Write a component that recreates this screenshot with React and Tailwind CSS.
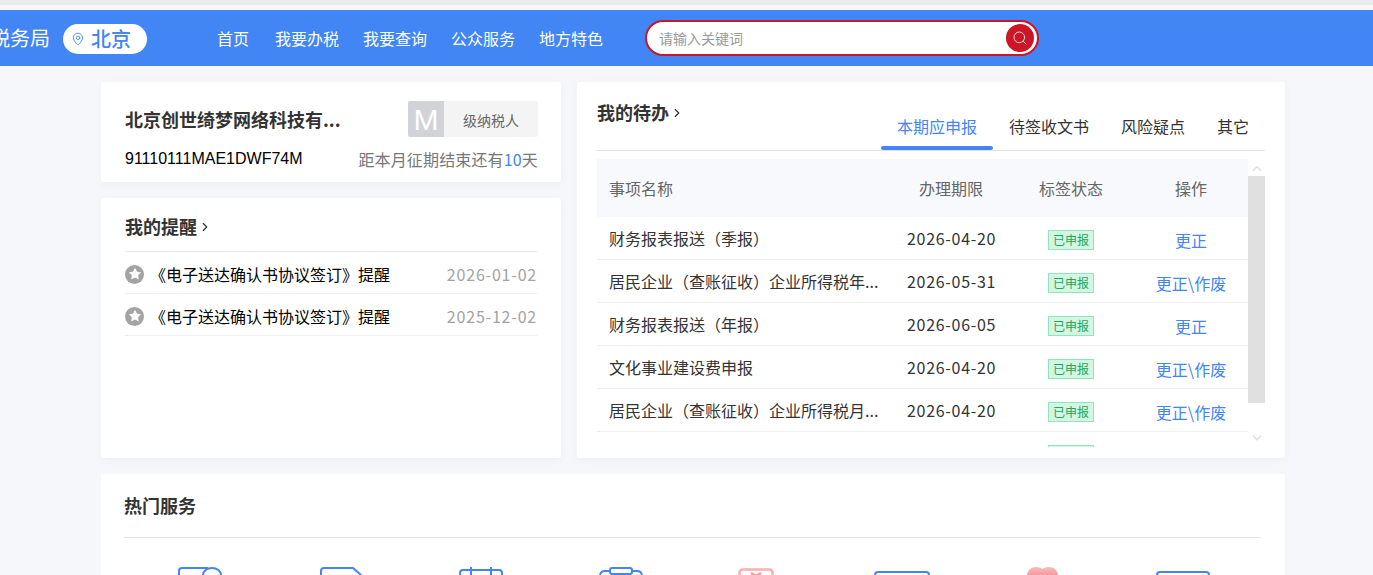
import React from 'react';
import { ChevronRight, ChevronUp, ChevronDown, MapPin, Search, Star } from 'lucide-react';

const navItems = ['首页', '我要办税', '我要查询', '公众服务', '地方特色'];
const tabs = ['本期应申报', '待签收文书', '风险疑点', '其它'];

const rows = [
  { name: '财务报表报送（季报）', date: '2026-04-20', action: '更正' },
  { name: '居民企业（查账征收）企业所得税年...', date: '2026-05-31', action: '更正\\作废' },
  { name: '财务报表报送（年报）', date: '2026-06-05', action: '更正' },
  { name: '文化事业建设费申报', date: '2026-04-20', action: '更正\\作废' },
  { name: '居民企业（查账征收）企业所得税月...', date: '2026-04-20', action: '更正\\作废' },
  { name: '', date: '', action: '' },
];

const reminders = [
  { title: '《电子送达确认书协议签订》提醒', date: '2026-01-02' },
  { title: '《电子送达确认书协议签订》提醒', date: '2025-12-02' },
];

const CardIcon = () => (
  <svg width="44" height="8" viewBox="0 0 44 8" fill="none" stroke="#4285f4" strokeWidth="2">
    <path d="M1 8V4a3 3 0 0 1 3-3h26M25 8a9 7 0 0 1 18 0" />
  </svg>
);
const DocIcon = () => (
  <svg width="42" height="8" viewBox="0 0 42 8" fill="none" stroke="#4285f4" strokeWidth="2">
    <path d="M1 8V4a3 3 0 0 1 3-3h29l8 7" />
  </svg>
);
const CalendarIcon = () => (
  <svg width="44" height="8" viewBox="0 0 44 8" fill="none" stroke="#4285f4" strokeWidth="2">
    <path d="M1 8V6a3 3 0 0 1 3-3h36a3 3 0 0 1 3 3v2M12 0v8M32 0v8" />
  </svg>
);
const ClipboardIcon = () => (
  <svg width="44" height="8" viewBox="0 0 44 8" fill="none" stroke="#4285f4" strokeWidth="2">
    <path d="M1 8a5 5 0 0 1 5-4h4M34 4h4a5 5 0 0 1 5 4" />
    <rect x="11" y="1" width="22" height="6" rx="2" />
  </svg>
);
const PinkBoxIcon = () => (
  <svg width="36" height="8" viewBox="0 0 36 8" fill="none" stroke="#f9aeb0" strokeWidth="2.5">
    <path d="M1.5 8V4.5a3 3 0 0 1 3-3h27a3 3 0 0 1 3 3V8" />
    <path d="M13 5l5 3 5-3" stroke="#f49a9c" />
  </svg>
);
const WideBoxIcon = () => (
  <svg width="56" height="4" viewBox="0 0 56 4" fill="none" stroke="#4285f4" strokeWidth="2">
    <path d="M1 4a3 3 0 0 1 3-3h48a3 3 0 0 1 3 3" />
  </svg>
);
const HeartIcon = () => (
  <svg width="31" height="8" viewBox="0 0 31 8">
    <defs>
      <linearGradient id="heartFill" x1="0" y1="0" x2="0" y2="1">
        <stop offset="0" stopColor="#f8bcbc" />
        <stop offset="1" stopColor="#f59a9b" />
      </linearGradient>
    </defs>
    <path fill="url(#heartFill)" d="M0 8C1 3 4 0 9 0c3 0 5 .8 6.500 2C17 .8 19 0 22 0c5 0 8 3 9 8z" />
  </svg>
);
const SmallBoxIcon = () => (
  <svg width="54" height="4" viewBox="0 0 54 4" fill="none" stroke="#4285f4" strokeWidth="2">
    <path d="M1 4a3 3 0 0 1 3-3h46a3 3 0 0 1 3 3" />
  </svg>
);

const services = [
  { icon: CardIcon, cls: 'pt-[29px]' },
  { icon: DocIcon, cls: 'pt-[29px]' },
  { icon: CalendarIcon, cls: 'pt-[29px]' },
  { icon: ClipboardIcon, cls: 'pt-[29px]' },
  { icon: PinkBoxIcon, cls: 'pt-[30px] pr-[12px]' },
  { icon: WideBoxIcon, cls: 'pt-[33px]' },
  { icon: HeartIcon, cls: 'pt-[29px]' },
  { icon: SmallBoxIcon, cls: 'pt-[33px]' },
];

const App = () => {
  return (
    <div
      className="h-[575px] overflow-hidden bg-[#f5f7fa] text-[#333]"
      style={{ fontFamily: '"Noto Sans CJK SC", "Liberation Sans", sans-serif' }}
    >
      {/* Browser strip above the page */}
      <div className="h-[5px] bg-[#ebebed]" />
      <div className="h-[5px] bg-[#f7f7f9]" />

      {/* Header */}
      <header className="flex h-[56px] items-center overflow-hidden bg-[#4285f4]">
        <span className="ml-[-10px] w-[60px] shrink-0 text-[20px] leading-none whitespace-nowrap text-white">税务局</span>
        <div className="mt-[2px] ml-[13px] flex h-[30px] w-[84px] shrink-0 items-center rounded-[15px] bg-white pl-[8px] text-[#4285f4]">
          <MapPin size={14} strokeWidth={1.5} />
          <span className="ml-[6px] text-[20px] leading-none font-medium">北京</span>
        </div>
        <nav className="ml-[70px] flex w-[386px] shrink-0 gap-[24px] text-[16px] text-white">
          {navItems.map((item, i) => (
            <a key={item} className={i === 0 ? 'mr-[2px] whitespace-nowrap' : 'whitespace-nowrap'}>{item}</a>
          ))}
        </nav>
        <div className="ml-[42px] flex h-[36px] w-[394px] shrink-0 items-center justify-between rounded-[18px] border-2 border-[#cc1526] bg-white pr-[3px] pl-[12px]">
          <span className="text-[14px] text-[#999]">请输入关键词</span>
          <span className="flex h-[28px] w-[28px] items-center justify-center rounded-full bg-[#cc1526]">
            <Search size={16} strokeWidth={1.5} className="text-[#f5d5d5]" />
          </span>
        </div>
      </header>

      {/* Main columns */}
      <main className="mt-[16px] ml-[101px] w-[1184px]">
        <div className="flex gap-[16px]">
          <div className="flex w-[460px] flex-col gap-[16px]">
            {/* Company */}
            <section className="h-[100px] rounded-[2px] bg-white px-[24px] pt-[19px] shadow-[0_2px_8px_rgba(0,0,0,0.04)]">
              <div className="flex items-center justify-between">
                <h2 className="text-[18px] leading-[36px] font-bold text-[#333]">北京创世绮梦网络科技有...</h2>
                <div className="mr-[-1px] flex h-[36px] w-[130px] overflow-hidden rounded-[2px] bg-[#f4f4f5]">
                  <span
                    className="flex w-[36px] items-center justify-center bg-[#d2d3d9] text-[30px] text-white"
                    style={{ fontFamily: '"Liberation Sans", sans-serif' }}
                  >M</span>
                  <span className="flex-1 text-center text-[14px] leading-[38px] text-[#666]">级纳税人</span>
                </div>
              </div>
              <div className="mt-[10px] flex items-center justify-between">
                <span className="text-[16px] leading-[22px] text-black" style={{ fontFamily: '"Liberation Sans", sans-serif' }}>91110111MAE1DWF74M</span>
                <span className="mr-[-1px] text-[16px] leading-[24px] tracking-[0.15px] text-[#777]">距本月征期结束还有<span className="text-[#4285f4]">10</span>天</span>
              </div>
            </section>

            {/* Reminders */}
            <section className="h-[260px] rounded-[2px] bg-white px-[24px] shadow-[0_2px_8px_rgba(0,0,0,0.04)]">
              <div className="flex h-[54px] items-center border-b border-[#e8e8e8] pt-[3px]">
                <h2 className="text-[18px] font-bold text-[#333]">我的提醒</h2>
                <ChevronRight size={14} strokeWidth={2} className="mt-[2px] ml-[1px] text-[#333]" />
              </div>
              {reminders.map((item) => (
                <div key={item.date} className="flex h-[42px] items-center justify-between border-b border-[#efefef] pt-[3px]">
                  <div className="flex items-center">
                    <span className="flex h-[19px] w-[19px] items-center justify-center rounded-full bg-[#a3a3a3]">
                      <Star size={14} fill="white" strokeWidth={0} />
                    </span>
                    <span className="ml-[6px] text-[16px] text-black">{item.title}</span>
                  </div>
                  <span className="mb-[1px] text-[16px] tracking-[0.8px] text-[#a3a3a3]">{item.date}</span>
                </div>
              ))}
            </section>
          </div>

          {/* Todo */}
          <section className="h-[376px] w-[708px] rounded-[2px] bg-white px-[20px] shadow-[0_2px_8px_rgba(0,0,0,0.04)]">
            <div className="flex h-[69px] justify-between border-b border-[#e6e1e4]">
              <div className="flex h-[60px] items-center">
                <h2 className="text-[18px] font-bold text-[#333]">我的待办</h2>
                <ChevronRight size={14} strokeWidth={2} className="mt-[2px] ml-[1px] text-[#333]" />
              </div>
              <div className="flex items-end text-[16px]">
                {tabs.map((tab, i) => (
                  <a key={tab} className="flex h-[46px] flex-col justify-between whitespace-nowrap">
                    <span className={i === 0 ? 'px-[16px] pt-[10px] text-[#4285f4]' : 'px-[16px] pt-[10px] text-[#333]'}>{tab}</span>
                    {i === 0 && <span className="block h-[4px] rounded-[2px] bg-[#4285f4]" />}
                  </a>
                ))}
              </div>
            </div>

            <div className="mt-[8px] flex h-[288px] overflow-hidden">
              <div className="w-[651px] shrink-0">
                <div className="flex h-[58px] items-center bg-[#f8f9fc] text-[16px] text-[#666]">
                  <span className="w-[288px] pl-[12px]">事项名称</span>
                  <span className="w-[132px] pl-[34px] whitespace-nowrap">办理期限</span>
                  <span className="w-[120px] pl-[22px] whitespace-nowrap">标签状态</span>
                  <span className="flex-1 pl-[38px]">操作</span>
                </div>
                {rows.map((row, i) => (
                  <div key={i} className="flex h-[43px] items-center border-b border-[#efefef] text-[16px]">
                    <span className="w-[288px] pl-[12px] whitespace-nowrap text-[#333]">{row.name}</span>
                    <span className="w-[132px] pl-[22px] tracking-[0.7px] text-[#333]">{row.date}</span>
                    <span className="w-[120px] pt-[4px] pl-[31px]">
                      <span className="block h-[20px] w-[46px] border border-[#8fe6bb] bg-[#d5f5e3] text-center text-[12px] leading-[18px] text-[#18a866]">已申报</span>
                    </span>
                    <span className="flex-1 pt-[4px] pr-[3px] text-center whitespace-nowrap text-[#4285f4]">{row.action}</span>
                  </div>
                ))}
              </div>

              {/* Scrollbar */}
              <div className="flex w-[17px] shrink-0 flex-col items-center text-[#e2e2e2]">
                <ChevronUp size={14} strokeWidth={3} className="mt-[2px] h-[15px]" />
                <div className="h-[227px] w-full bg-[#e0e0e0]" />
                <ChevronDown size={14} strokeWidth={3} className="mt-[28px]" />
              </div>
            </div>
          </section>
        </div>

        {/* Hot services */}
        <section className="mt-[16px] h-[200px] rounded-[2px] bg-white pr-[24px] pl-[23px]">
          <div className="flex h-[64px] items-center border-b border-[#e8e8e8]">
            <h2 className="text-[18px] font-bold text-[#333]">热门服务</h2>
          </div>
          <div className="grid grid-cols-8 pr-[8px] pl-[6px]">
            {services.map((s, i) => (
              <div key={i} className={`flex justify-center ${s.cls}`}>
                <s.icon />
              </div>
            ))}
          </div>
        </section>
      </main>
    </div>
  );
};

export default App;
